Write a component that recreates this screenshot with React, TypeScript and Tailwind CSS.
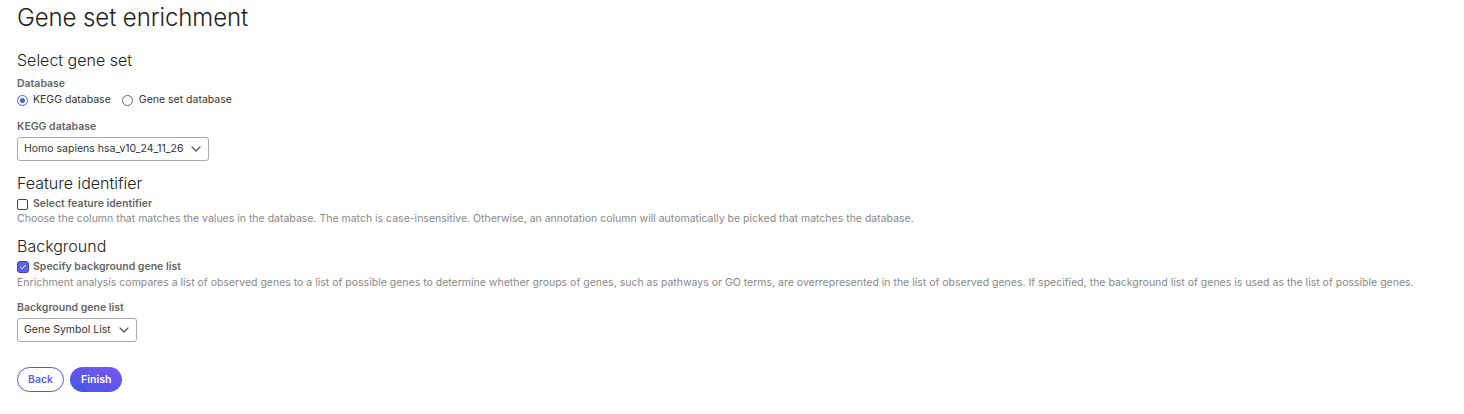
import React from "react";

const Chevron = () => (
  <svg width="12" height="12" viewBox="0 0 12 12" fill="none" className="ml-[7px]">
    <path d="M2 4l4 4 4-4" stroke="#555" strokeWidth="1.2" strokeLinecap="round" strokeLinejoin="round" />
  </svg>
);

export default function App() {
  return (
    <div className="bg-white min-h-[414px] w-[1464px] pl-[17px] pt-[3px] text-[#222]" style={{ fontFamily: "Inter, 'Noto Sans', sans-serif" }}>
      <h1 className="text-[24px] font-light leading-[30px] tracking-[-0.1px]">Gene set enrichment</h1>

      <h2 className="mt-[17px] text-[16px] font-light leading-[20px]">Select gene set</h2>
      <div className="mt-[7px] text-[10.5px] font-semibold text-[#666] leading-[14px]">Database</div>
      <div className="mt-[1px] flex items-center text-[10.5px] leading-[16px] text-[#333]">
        <span className="w-[11px] h-[11px] rounded-full border border-[#4361ee] flex items-center justify-center">
          <span className="w-[5px] h-[5px] rounded-full bg-[#4361ee]" />
        </span>
        <span className="ml-[5px]">KEGG database</span>
        <span className="ml-[11px] w-[11px] h-[11px] rounded-full border border-[#666]" />
        <span className="ml-[6px]">Gene set database</span>
      </div>

      <div className="mt-[12px] text-[10.5px] font-semibold text-[#666] leading-[14px]">KEGG database</div>
      <div className="mt-[3px] inline-flex items-center h-[24px] px-[6px] border border-[#aaa] rounded-[3px] text-[10.5px] text-[#333]">
        Homo sapiens hsa_v10_24_11_26
        <Chevron />
      </div>

      <h2 className="mt-[12px] text-[16px] font-light leading-[20px]">Feature identifier</h2>
      <div className="mt-[4px] flex items-center text-[10.5px] leading-[14px]">
        <span className="w-[11px] h-[11px] rounded-[2px] border border-[#444]" />
        <span className="ml-[5px] font-semibold text-[#666]">Select feature identifier</span>
      </div>
      <div className="mt-[1px] text-[10.5px] leading-[14px] text-[#888]">
        Choose the column that matches the values in the database. The match is case-insensitive. Otherwise, an annotation column will automatically be picked that matches the database.
      </div>

      <h2 className="mt-[10px] text-[16px] font-light leading-[20px]">Background</h2>
      <div className="mt-[4px] flex items-center text-[10.5px] leading-[14px]">
        <span className="w-[12px] h-[12px] rounded-[3px] bg-[#5b63e8] border border-[#3b44c8] flex items-center justify-center">
          <svg width="8" height="8" viewBox="0 0 8 8" fill="none">
            <path d="M1.5 4.2l1.6 1.6L6.5 2.2" stroke="white" strokeWidth="1" strokeLinecap="round" strokeLinejoin="round" />
          </svg>
        </span>
        <span className="ml-[4px] font-semibold text-[#666]">Specify background gene list</span>
      </div>
      <div className="mt-[2px] text-[10.5px] leading-[14px] text-[#888]">
        Enrichment analysis compares a list of observed genes to a list of possible genes to determine whether groups of genes, such as pathways or GO terms, are overrepresented in the list of observed genes. If specified, the background list of genes is used as the list of possible genes.
      </div>

      <div className="mt-[11px] text-[10.5px] font-semibold text-[#666] leading-[14px]">Background gene list</div>
      <div className="mt-[3px] inline-flex items-center h-[24px] px-[6px] border border-[#aaa] rounded-[3px] text-[10.5px] text-[#333]">
        Gene Symbol List
        <Chevron />
      </div>

      <div className="mt-[25px] flex gap-[6px]">
        <button className="h-[25px] px-[10px] rounded-full border border-[#4a5ee8] text-[#5b63e8] text-[10.5px] font-semibold bg-white">Back</button>
        <button className="h-[25px] px-[11px] rounded-full text-white text-[10.5px] font-semibold bg-gradient-to-tr from-[#3f55e6] to-[#7a55f0]">Finish</button>
      </div>
    </div>
  );
}
